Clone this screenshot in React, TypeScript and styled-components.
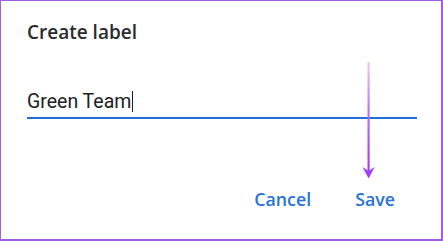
import React from 'react';
import styled, { createGlobalStyle } from 'styled-components';

const GlobalStyle = createGlobalStyle`
    html, body {
        margin: 0;
        padding: 0;
        background-color: #ffffff;
    }
`;

const Frame = styled.div`
    position: relative;
    width: 443px;
    height: 241px;
    box-sizing: border-box;
    border-style: solid;
    border-color: #a25ee6;
    border-width: 1px 2px 2px 1px;
    padding: 18px 24px 0 26px;
    background-color: #ffffff;
`;

const Title = styled.h3`
    margin: 0;
    font-family: 'Open Sans', 'Noto Sans', sans-serif;
    font-size: 19px;
    font-weight: 600;
    line-height: 26px;
    color: #2a2b2e;
`;

const Field = styled.div`
    display: flex;
    align-items: center;
    margin-top: 40px;
    height: 32px;
    border-bottom: 2.5px solid #1f70d6;
`;

const FieldText = styled.span`
    font-family: Roboto, 'Liberation Sans', sans-serif;
    font-size: 19.5px;
    color: #202124;
`;

const Caret = styled.span`
    width: 1px;
    height: 21px;
    margin-left: 1px;
    background-color: #202124;
`;

const Actions = styled.div`
    display: flex;
    justify-content: flex-end;
    gap: 44px;
    margin-top: 68px;
    padding-right: 22px;
`;

const TextButton = styled.button`
    padding: 0;
    border-style: none;
    outline: none;
    background: none;
    font-family: 'Open Sans', 'Noto Sans', sans-serif;
    font-size: 17.8px;
    font-weight: 600;
    color: #2a72d4;
`;

const Arrow = styled.svg`
    position: absolute;
    left: 359px;
    top: 61px;
`;

export default function App() {
    return (
        <>
            <GlobalStyle />
            <Frame>
                <Title>Create label</Title>
                <Field>
                    <FieldText>Green Team</FieldText>
                    <Caret />
                </Field>
                <Actions>
                    <TextButton>Cancel</TextButton>
                    <TextButton>Save</TextButton>
                </Actions>
                <Arrow width="18" height="120" viewBox="0 0 18 120">
                    <defs>
                        <linearGradient id="shaft" x1="0" y1="0" x2="0" y2="1">
                            <stop offset="0" stopColor="#e6cdf3" />
                            <stop offset="0.45" stopColor="#b874ea" />
                            <stop offset="1" stopColor="#a33cf2" />
                        </linearGradient>
                    </defs>
                    <rect x="7.5" y="0" width="2.2" height="112" fill="url(#shaft)" />
                    <path d="M2.5 105 L8.6 116.5 L14.7 105 L8.6 109 Z" fill="#a33cf2" />
                </Arrow>
            </Frame>
        </>
    );
}
